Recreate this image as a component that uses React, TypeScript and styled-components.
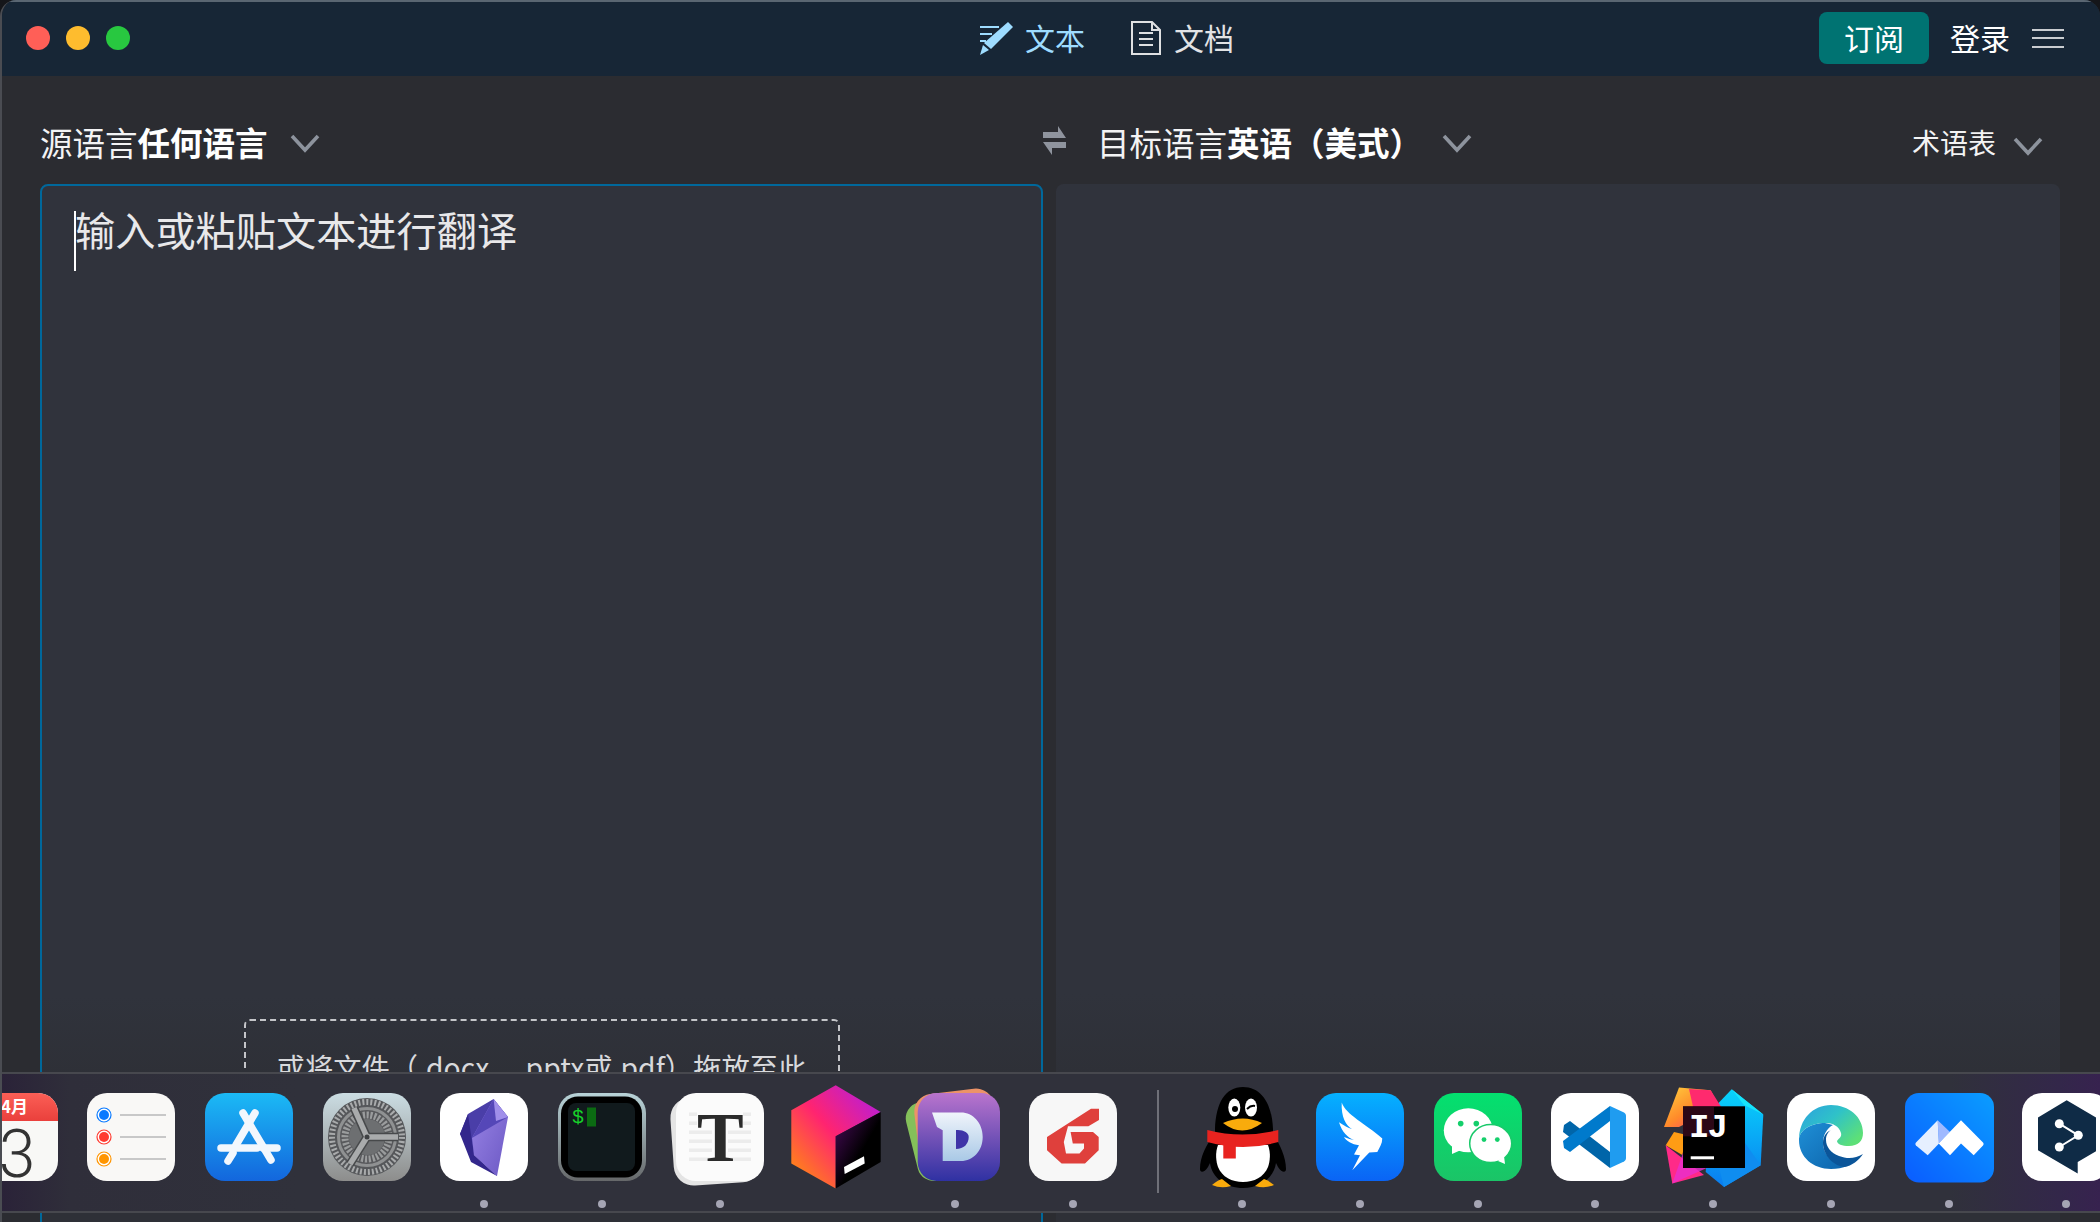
import React from "react";
import styled, { createGlobalStyle } from "styled-components";

const GlobalStyle = createGlobalStyle`
  html, body {
    margin: 0;
    height: 100%;
    background: #15161a;
    overflow: hidden;
  }
  body {
    font-family: "Noto Sans CJK SC", "Noto Sans", sans-serif;
  }
  * { box-sizing: border-box; }
`;

const Window = styled.div`
  position: relative;
  width: 2100px;
  height: 1222px;
  display: flex;
  flex-direction: column;
  overflow: hidden;
  background: #2b2c31;
  border-left: 2px solid #4a4c52;
  border-radius: 16px 16px 0 0;
`;

const TitleBar = styled.header`
  height: 76px;
  flex: none;
  display: flex;
  align-items: center;
  background: #172636;
  border-top: 2px solid #5a6672;
  padding: 0 36px 0 24px;
`;

const Lights = styled.div`
  display: flex;
  gap: 16px;
  margin-top: -2px;
`;

const Light = styled.span<{ $color: string }>`
  width: 24px;
  height: 24px;
  border-radius: 50%;
  background: ${({ $color }) => $color};
`;

const Tabs = styled.nav`
  display: flex;
  align-items: center;
  margin-left: auto;
  margin-right: 585px;
  margin-top: -2px;
`;

const TabLabel = styled.span<{ $active?: boolean }>`
  font-size: 30px;
  line-height: 40px;
  margin-top: -3px;
  margin-left: ${({ $active }) => ($active ? "10px" : "13px")};
  margin-right: ${({ $active }) => ($active ? "46px" : "0")};
  color: ${({ $active }) => ($active ? "#9edcff" : "#e2e3e5")};
`;

const Actions = styled.div`
  display: flex;
  align-items: center;
  margin-top: -2px;
`;

const SubscribeButton = styled.button`
  width: 110px;
  height: 52px;
  padding: 0 0 3px;
  border: 0;
  border-radius: 8px;
  background: #007372;
  color: #fff;
  font: inherit;
  font-size: 30px;
  line-height: 40px;
`;

const Login = styled.span`
  margin: -3px 22px 0 21px;
  font-size: 30px;
  line-height: 40px;
  color: #fff;
`;

const Burger = styled.div`
  width: 32px;
  display: flex;
  flex-direction: column;
  gap: 6.5px;
  span {
    height: 2px;
    background: #c9ccd0;
  }
`;

const Main = styled.main`
  flex: 1;
  min-height: 0;
  padding: 0 38px;
  display: flex;
  flex-direction: column;
`;

const Columns = styled.div`
  display: grid;
  grid-template-columns: 1003px 1004px;
  gap: 13px;
`;

const LangRow = styled(Columns)`
  height: 108px;
  align-items: center;
`;

const LangGroup = styled.div`
  display: flex;
  align-items: center;
  height: 44px;
  margin-top: 24px;
`;

const LangLabel = styled.span`
  font-size: 32.5px;
  line-height: 44px;
  color: #f3f3f4;
  white-space: nowrap;
  b {
    font-weight: 700;
    color: #fff;
  }
`;

const ChevronSvg = styled.svg<{ $gap: number; $drop?: number }>`
  flex: none;
  margin-left: ${({ $gap }) => $gap}px;
  margin-top: ${({ $drop }) => $drop ?? 2}px;
`;

const Chevron = ({ gap, drop }: { gap: number; drop?: number }) => (
  <ChevronSvg $gap={gap} $drop={drop} width="30" height="20" viewBox="0 0 30 20" fill="none" stroke="#8d939d" strokeWidth="3.6">
    <path d="M2 3l13 14L28 3" />
  </ChevronSvg>
);

const SwapButton = styled.span`
  display: flex;
  margin: -4px 30px 0 -13px;
`;

const Glossary = styled.span`
  margin-left: auto;
  font-size: 28px;
  line-height: 40px;
  color: #f3f3f4;
`;

const GlossaryEnd = styled.span`
  display: flex;
  margin-right: 17px;
  margin-top: 8px;
`;

const PanelRow = styled(Columns)`
  flex: 1;
  min-height: 0;
`;

const Panel = styled.section<{ $focused?: boolean }>`
  position: relative;
  height: 1100px;
  display: flex;
  flex-direction: column;
  background: linear-gradient(#30333c 0, #30333c 810px, #2e3037 890px);
  border-radius: 8px;
  border: ${({ $focused }) => ($focused ? "2px solid #00689b" : "0")};
`;

const Placeholder = styled.div`
  padding: 15px 0 0 33px;
  font-size: 40.2px;
  line-height: 56px;
  color: #e8e8ea;
`;

const Caret = styled.span`
  position: absolute;
  left: 32px;
  top: 25px;
  width: 2px;
  height: 60px;
  background: #fff;
`;

const DropZone = styled.div`
  width: 596px;
  height: 130px;
  margin: 762px auto 0;
  padding-top: 26px;
  border: 2px dashed #c4c5c9;
  border-radius: 6px;
  text-align: center;
  font-size: 28.3px;
  line-height: 40px;
  color: #d8d9dc;
  white-space: nowrap;
`;

const Dock = styled.footer`
  position: absolute;
  left: -2px;
  right: 0;
  top: 1072px;
  height: 141px;
  display: flex;
  overflow: hidden;
  border-top: 2px solid #47484e;
  border-bottom: 2px solid #47484e;
  background: linear-gradient(
    90deg,
    #2a2238 0,
    #2f2e3a 70px,
    #30313b 300px,
    #30313b 1950px,
    #33274a 2060px,
    #37224f 2100px
  );
`;

const DockTrack = styled.div`
  display: flex;
  flex: none;
  margin-left: -45.3px;
`;

const DockItem = styled.div`
  width: 117.7px;
  flex: none;
  display: flex;
  flex-direction: column;
  align-items: center;
  padding-top: 3px;
  svg {
    display: block;
    flex: none;
  }
`;

const RunDot = styled.span<{ $on: boolean }>`
  width: 8px;
  height: 8px;
  margin-top: 3px;
  border-radius: 50%;
  background: #a5a5b4;
  visibility: ${({ $on }) => ($on ? "visible" : "hidden")};
`;

const DockDivider = styled.div`
  width: 52px;
  flex: none;
  display: flex;
  justify-content: center;
  padding-top: 16px;
  span {
    width: 2px;
    height: 103px;
    background: #6f7078;
  }
`;

const ICON_BOX = { width: 120, height: 120, viewBox: "-16 -16 120 120" };
const MONO = "'Liberation Mono', monospace";
const SERIF = "'Liberation Serif', serif";
const SANS = "'Noto Sans CJK SC', sans-serif";

const PenIcon = () => (
  <svg width="36" height="36" viewBox="0 0 36 36" fill="#9edcff">
    <path d="M29 2l5 5L12 29l-7-6z" />
    <path d="M4 25l6 5-9 5z" />
    <rect x="1" y="6" width="19" height="2" />
    <rect x="1" y="13" width="12" height="2" />
    <rect x="1" y="20" width="6" height="2" />
  </svg>
);

const DocIcon = () => (
  <svg width="30" height="36" viewBox="0 0 30 36" fill="none" stroke="#dfe0e2" strokeWidth="2">
    <path d="M1 2h20l8 8v24H1z" />
    <path d="M21 2v8h8" />
    <path d="M8 13h14M8 19h14M8 25h14" />
  </svg>
);

const SwapIcon = () => (
  <svg width="24" height="29" viewBox="0 0 24 29" fill="#8f949e">
    <path d="M0 6h15V0l8 12H0z" />
    <path d="M23 16v6H9v7L0 16z" />
  </svg>
);

const Tile = styled.rect.attrs({ x: 0, y: 0, width: 88, height: 88, rx: 20 })``;

const CalendarIcon = () => (
  <svg {...ICON_BOX}>
    <defs>
      <linearGradient id="calTop" x1="0" y1="0" x2="0" y2="1">
        <stop offset="0" stopColor="#fb5f56" />
        <stop offset="1" stopColor="#ea403c" />
      </linearGradient>
      <clipPath id="calClip"><Tile /></clipPath>
    </defs>
    <Tile fill="#f8f8f6" />
    <rect width="88" height="28" fill="url(#calTop)" clipPath="url(#calClip)" />
    <text x="31" y="20" fontSize="17" fontWeight="700" fill="#fff" fontFamily={SANS}>4月</text>
    <text x="47" y="84" fontSize="66" fontWeight="300" textAnchor="middle" fill="#333" fontFamily="Roboto, sans-serif">3</text>
  </svg>
);

const RemindersIcon = () => (
  <svg {...ICON_BOX}>
    <Tile fill="#f9f8f6" />
    {[["#0a7aff", 22], ["#ff3b30", 44], ["#ff9500", 66]].map(([color, y]) => (
      <g key={color as string}>
        <circle cx="17" cy={y} r="7" fill="#fff" stroke={color as string} strokeWidth="1.2" />
        <circle cx="17" cy={y} r="5" fill={color as string} />
        <rect x="33" y={(y as number) - 0.8} width="46" height="1.6" fill="#bcbcbc" />
      </g>
    ))}
  </svg>
);

const AppStoreIcon = () => (
  <svg {...ICON_BOX}>
    <defs>
      <linearGradient id="asBg" x1="0" y1="0" x2="0" y2="1">
        <stop offset="0" stopColor="#1bbaf5" />
        <stop offset="1" stopColor="#1366dd" />
      </linearGradient>
    </defs>
    <Tile fill="url(#asBg)" />
    <g stroke="#f2f7fd" strokeWidth="7.5" strokeLinecap="round">
      <path d="M50 20L31 52" />
      <path d="M28 60l-5 8" />
      <path d="M38 20l28 47" />
      <path d="M16 55h36" />
      <path d="M58 55h14" />
    </g>
  </svg>
);

const SettingsIcon = () => (
  <svg {...ICON_BOX}>
    <defs>
      <linearGradient id="setBg" x1="0" y1="0" x2="0" y2="1">
        <stop offset="0" stopColor="#cbdde3" />
        <stop offset="1" stopColor="#8d8d8c" />
      </linearGradient>
    </defs>
    <Tile fill="url(#setBg)" />
    <circle cx="44" cy="44" r="39" fill="#55575a" />
    <circle cx="44" cy="44" r="35" fill="none" stroke="#a9abac" strokeWidth="6" strokeDasharray="2 2" />
    <circle cx="44" cy="44" r="31" fill="#58595c" />
    <circle cx="44" cy="44" r="28.500" fill="none" stroke="#8f9192" strokeWidth="3" />
    <circle cx="44" cy="44" r="22" fill="none" stroke="#9a9c9d" strokeWidth="7" strokeDasharray="2.200 1.600" />
    <circle cx="44" cy="44" r="18" fill="#6d6f71" />
    <g stroke="#47494b" strokeWidth="8.500">
      <path d="M44 44L31 15" />
      <path d="M44 44L75 44" />
      <path d="M44 44L27 71" />
    </g>
    <g stroke="#a9abac" strokeWidth="5.500">
      <path d="M44 44L31 15" />
      <path d="M44 44L75 44" />
      <path d="M44 44L27 71" />
    </g>
    <circle cx="44" cy="44" r="2.500" fill="#3f4143" />
  </svg>
);

const ObsidianIcon = () => (
  <svg {...ICON_BOX}>
    <defs>
      <linearGradient id="obLight" x1="0" y1="0" x2="1" y2="1">
        <stop offset="0" stopColor="#9a85e6" />
        <stop offset="1" stopColor="#6b58c4" />
      </linearGradient>
    </defs>
    <Tile fill="#fff" />
    <path d="M53.600 6L28 21 20 41l14 21 23 21z" fill="#4a3ea8" />
    <path d="M28 21L20 41l11 28 26 14-23-21z" fill="#33278c" />
    <path d="M53.600 6L68 24l-11 59-23-21-2-17z" fill="url(#obLight)" />
    <path d="M53.600 6L68 24 32 45z" fill="#5547b8" />
    <path d="M53.600 6L68 24l-12 4z" fill="#a08fea" />
  </svg>
);

const TerminalIcon = () => (
  <svg {...ICON_BOX}>
    <defs>
      <linearGradient id="termEdge" x1="0" y1="0" x2="0" y2="1">
        <stop offset="0" stopColor="#b8d3d8" />
        <stop offset="1" stopColor="#66686a" />
      </linearGradient>
    </defs>
    <Tile fill="url(#termEdge)" />
    <rect x="3" y="3.500" width="81" height="81" rx="17" fill="#000" />
    <rect x="10" y="10" width="67" height="68" rx="8" fill="#111a1d" />
    <text x="14" y="30" fontSize="20" fill="#17d22a" fontFamily={MONO}>$</text>
    <rect x="29" y="14.500" width="9" height="19" fill="#0b6b12" />
  </svg>
);

const TyporaIcon = () => (
  <svg {...ICON_BOX}>
    <rect x="-4" y="3" width="88" height="88" rx="20" fill="#e4e4e4" transform="rotate(-4 40 47)" />
    <Tile fill="#fbfbfb" />
    <g fill="#ececec">
      <rect x="13" y="19.500" width="8" height="3.500" />
      <rect x="67" y="19.500" width="8" height="3.500" />
      <rect x="13" y="28.500" width="8" height="3.500" />
      <rect x="67" y="28.500" width="8" height="3.500" />
      {[37.5, 46.5, 55.5, 64.5].map((y) => (
        <React.Fragment key={y}>
          <rect x="13" y={y} width="23" height="3.500" />
          <rect x="52" y={y} width="23" height="3.500" />
        </React.Fragment>
      ))}
    </g>
    <text x="44.300" y="67.500" fontSize="70" fontWeight="700" textAnchor="middle" fill="#2b2b2b" fontFamily={SERIF}>T</text>
  </svg>
);

const ToolboxIcon = () => (
  <svg {...ICON_BOX}>
    <defs>
      <linearGradient id="tbFace" x1="0" y1="1" x2="1" y2="0">
        <stop offset="0.05" stopColor="#ff8f0e" />
        <stop offset="0.5" stopColor="#ff2470" />
        <stop offset="1" stopColor="#ac1cec" />
      </linearGradient>
      <linearGradient id="tbDark" x1="0" y1="0" x2="1" y2="1">
        <stop offset="0" stopColor="#4a0a5c" />
        <stop offset="0.55" stopColor="#000" />
      </linearGradient>
    </defs>
    <path d="M42.700-7.700L87.700 19 42.700 43.300v52.300L-1.700 70.600V17.300z" fill="url(#tbFace)" />
    <path d="M87.700 19v50L42.700 95.600V43.300z" fill="url(#tbDark)" />
    <path d="M51 74l20-10.700.7 7.300-20 10.400z" fill="#fff" />
  </svg>
);

const DashIcon = () => (
  <svg {...ICON_BOX}>
    <defs>
      <linearGradient id="dashBg" x1="0" y1="0" x2="0" y2="1">
        <stop offset="0" stopColor="#b974cd" />
        <stop offset="1" stopColor="#2f31a2" />
      </linearGradient>
      <linearGradient id="dashD" x1="0" y1="0" x2="0" y2="1">
        <stop offset="0" stopColor="#f0f4fb" />
        <stop offset="1" stopColor="#a9c9e6" />
      </linearGradient>
    </defs>
    <rect x="0" y="4" width="70" height="80" rx="16" fill="#84c05a" transform="rotate(-14 35 44)" />
    <rect x="6" y="-2" width="80" height="84" rx="18" fill="#ec9368" transform="rotate(-7 46 40)" />
    <rect x="6.700" y="0" width="82.300" height="88" rx="19" fill="url(#dashBg)" />
    <path d="M21 19.600h29C62 19.600 71.700 30 71.700 44S62 68 50 68H31.700V37.300L26 34z" fill="url(#dashD)" />
    <path d="M45 37h2c6 0 10.700 3 10.700 7 0 7-5 12-12.700 12z" fill="#3f34a8" />
  </svg>
);

const FoxitIcon = () => (
  <svg {...ICON_BOX}>
    <Tile fill="#f7f7f7" />
    <path
      d="M62 15.700h8V27L59.400 33.300H39L34.800 49l2.200 11.600h13.500l4.500-5v-5H43.800L41.600 39H64l5.700 5v13.300L56 70.600H32.600L18 57.300V44z"
      fill="#df403c"
    />
  </svg>
);

const QQIcon = () => (
  <svg {...ICON_BOX}>
    <path
      d="M45-6C27-6 18 10 17 36v4C8 52 2 64 2 76c0 4 4 4 8-2l2-4c2 15 16 25 33 25s31-10 33-25l2 4c4 6 8 6 8 2 0-12-6-24-13-36v-4C74 10 63-6 45-6z"
      fill="#000"
    />
    <path d="M20 52h50c3 8 2 16 0 22-4 10-14 15-25 15s-21-5-25-15c-2-6-3-14 0-22z" fill="#fff" />
    <ellipse cx="36.300" cy="14.600" rx="6" ry="9" fill="#fff" />
    <circle cx="37" cy="16" r="3" fill="#000" />
    <ellipse cx="53" cy="14.600" rx="6" ry="9" fill="#fff" />
    <path d="M49 16q4-4 8-3" stroke="#000" strokeWidth="2" fill="none" />
    <path d="M25 30q20-9 39 0-20 15-39 0z" fill="#f9ab0c" />
    <path d="M9.300 37q35 9 71 0l0 12q-35 10-71 0z" fill="#e8231f" />
    <rect x="25.300" y="47" width="12.500" height="18.500" fill="#e8231f" />
    <path d="M14 92q6-5 10-6l9 7q-10 3-19-1z" fill="#f9ab0c" />
    <path d="M76 92q-6-5-10-6l-9 7q10 3 19-1z" fill="#f9ab0c" />
  </svg>
);

const DingTalkIcon = () => (
  <svg {...ICON_BOX}>
    <defs>
      <linearGradient id="dingBg" x1="0" y1="0" x2="0" y2="1">
        <stop offset="0" stopColor="#05b1ff" />
        <stop offset="1" stopColor="#0a64f5" />
      </linearGradient>
    </defs>
    <Tile fill="url(#dingBg)" />
    <path
      d="M25.700 9.600C30 22 50 31 66.300 45.600c0 5-2.800 9.400-5 13.400l-8 .6-17 17.700L44 62.300l-6-.7 5-9.300c-7-1-13-4.300-15-8.300 4 1.500 7 2.500 10 3-6-2-12-8-15-17.800 5 3.500 9 5.500 13 6.800-6-3-11-12-10.300-26.400z"
      fill="#fff"
    />
  </svg>
);

const WeChatIcon = () => (
  <svg {...ICON_BOX}>
    <defs>
      <linearGradient id="wxBg" x1="0" y1="0" x2="0" y2="1">
        <stop offset="0" stopColor="#03e06f" />
        <stop offset="1" stopColor="#1bc467" />
      </linearGradient>
    </defs>
    <Tile fill="url(#wxBg)" />
    <ellipse cx="34.300" cy="37.300" rx="24.500" ry="22" fill="#fff" />
    <path d="M18 52l0 9 9-4z" fill="#fff" />
    <ellipse cx="56.700" cy="50.600" rx="21" ry="19" fill="#fff" stroke="#19c96a" strokeWidth="1.500" />
    <path d="M64 68l7 3-1-8z" fill="#fff" />
    <g fill="#14cf6b">
      <circle cx="26.700" cy="30.600" r="2.800" />
      <circle cx="42.300" cy="30.600" r="2.800" />
      <circle cx="50" cy="46.600" r="2.400" />
      <circle cx="63.300" cy="46.600" r="2.400" />
    </g>
  </svg>
);

const VSCodeIcon = () => (
  <svg {...ICON_BOX}>
    <Tile fill="#fff" />
    <path d="M13 32l6-4 40 31v16L12 39z" fill="#0065a9" />
    <path d="M13 55l6 4 40-31V13L12 48z" fill="#007acc" />
    <path d="M59 13l14 6.500c1.300.7 2 2 2 3.500v42c0 1.500-.7 2.800-2 3.500L59 75z" fill="#1f9cf0" />
  </svg>
);

const IntelliJIcon = () => (
  <svg {...ICON_BOX}>
    <defs>
      <linearGradient id="ijBlue" x1="0" y1="0" x2="0" y2="1">
        <stop offset="0" stopColor="#08d4fb" />
        <stop offset="1" stopColor="#0a7cf0" />
      </linearGradient>
      <linearGradient id="ijWarm" x1="0" y1="0" x2="1" y2="1">
        <stop offset="0" stopColor="#ffd23f" />
        <stop offset="0.5" stopColor="#ff8a2a" />
        <stop offset="1" stopColor="#ff2e78" />
      </linearGradient>
    </defs>
    <path d="M62.700-3.700L94.300 21.600 91.700 72.300 55 94 36.700 79 40 20z" fill="url(#ijBlue)" />
    <path d="M94.300 21.600L75 12 62.700-3.700z" fill="#16e4fb" />
    <path d="M76 50l15.700 22.300L55 94l-5-19z" fill="#0f8df0" />
    <path d="M10-5.400L41.700-2.700 50 14 10 34l-15 0z" fill="url(#ijWarm)" />
    <path d="M20-4L41.700-2.700 56 20 30 40z" fill="#ff2a6e" />
    <path d="M5 39L-3.300 52.300 13.300 62 18 42z" fill="#ff9c14" />
    <path d="M3.300 90.600L-3.300 52.300 35 82z" fill="#ff2a88" />
    <path d="M3.300 90.600L14 60 40 74z" fill="#e92fd0" opacity="0.8" />
    <rect x="14" y="13.300" width="62" height="61.700" fill="#000" />
    <rect x="14" y="13.300" width="31" height="30" fill="#4a0d26" opacity="0.6" />
    <text x="20" y="44" fontSize="34" fontWeight="700" fill="#fff" fontFamily={MONO} letterSpacing="-2">IJ</text>
    <rect x="21.700" y="63.300" width="23.300" height="3" fill="#fff" />
  </svg>
);

const EdgeIcon = () => (
  <svg {...ICON_BOX}>
    <defs>
      <linearGradient id="edgeTop" x1="0" y1="0" x2="1" y2="0.700">
        <stop offset="0" stopColor="#2b9fe0" />
        <stop offset="0.500" stopColor="#2fc2c8" />
        <stop offset="1" stopColor="#5de077" />
      </linearGradient>
      <linearGradient id="edgeMid" x1="0" y1="0" x2="1" y2="1">
        <stop offset="0" stopColor="#1f8fd6" />
        <stop offset="1" stopColor="#0c63ab" />
      </linearGradient>
    </defs>
    <Tile fill="#fff" />
    <path d="M38 30C24 30 12 37 12 47c0 17 14 29 32 29 6 0 12-1 16-3-12 0-24-11-24-23 0-8 4-15 10-18z" fill="url(#edgeMid)" />
    <path d="M36 50c0 10 8 22 21 24 8-1 15-7 19-13-8 5-16 5-24 2-8-3-13-9-13-16 0-5 2-8 5-10-5 2-8 7-8 13z" fill="#0b5599" />
    <path d="M12 47C12 26 26 12 44 12c18 0 32 12 32 28 0 8-5 13-14 13-7 0-12-2-12-5 2-3 5-4 4-8-2-7-8-10-16-10-14 0-26 7-26 17z" fill="url(#edgeTop)" />
  </svg>
);

const LarkIcon = () => (
  <svg {...ICON_BOX}>
    <defs>
      <linearGradient id="larkBg" x1="0" y1="1" x2="1" y2="0">
        <stop offset="0" stopColor="#0a5cff" />
        <stop offset="1" stopColor="#0a9dff" />
      </linearGradient>
    </defs>
    <rect x="0" y="0" width="89" height="89.500" rx="14" fill="url(#larkBg)" />
    <path d="M32.700 27.300L11 49.600c-.8 1-.8 2 0 3L22.700 62.300 34 50.600z" fill="#e6efff" />
    <path d="M32.700 27.300L45 39 33.700 50.600z" fill="#9fb9ff" />
    <path d="M56 27.300L78 49.600c.8 1 .8 2 0 3L68.700 62.300 56 50.600 45 62.300 33.700 50.600z" fill="#fff" />
  </svg>
);

const DeepLIcon = () => (
  <svg {...ICON_BOX}>
    <Tile fill="#fff" />
    <path d="M44.700 7.300L74 24.600v33.700L55.700 69v11.600L16 57.300V24.600z" fill="#0f2b46" />
    <path d="M37.300 30.700l19 11.600-19 11.700" stroke="#fff" strokeWidth="2" fill="none" />
    <circle cx="37.300" cy="30.700" r="4.500" fill="#fff" />
    <circle cx="56.300" cy="42.300" r="4.500" fill="#fff" />
    <circle cx="37.300" cy="54" r="4.500" fill="#fff" />
  </svg>
);

type DockApp = { name: string; icon: React.ReactNode; running: boolean };

const leftApps: DockApp[] = [
  { name: "calendar", icon: <CalendarIcon />, running: false },
  { name: "reminders", icon: <RemindersIcon />, running: false },
  { name: "appstore", icon: <AppStoreIcon />, running: false },
  { name: "settings", icon: <SettingsIcon />, running: false },
  { name: "obsidian", icon: <ObsidianIcon />, running: true },
  { name: "terminal", icon: <TerminalIcon />, running: true },
  { name: "typora", icon: <TyporaIcon />, running: true },
  { name: "toolbox", icon: <ToolboxIcon />, running: false },
  { name: "dash", icon: <DashIcon />, running: true },
  { name: "foxit", icon: <FoxitIcon />, running: true },
];

const rightApps: DockApp[] = [
  { name: "qq", icon: <QQIcon />, running: true },
  { name: "dingtalk", icon: <DingTalkIcon />, running: true },
  { name: "wechat", icon: <WeChatIcon />, running: true },
  { name: "vscode", icon: <VSCodeIcon />, running: true },
  { name: "intellij", icon: <IntelliJIcon />, running: true },
  { name: "edge", icon: <EdgeIcon />, running: true },
  { name: "lark", icon: <LarkIcon />, running: true },
  { name: "deepl", icon: <DeepLIcon />, running: true },
];

const renderApp = (app: DockApp) => (
  <DockItem key={app.name}>
    {app.icon}
    <RunDot $on={app.running} />
  </DockItem>
);

const App = () => (
  <>
    <GlobalStyle />
    <Window>
      <TitleBar>
        <Lights>
          <Light $color="#ff5f57" />
          <Light $color="#febc2e" />
          <Light $color="#28c840" />
        </Lights>
        <Tabs>
          <PenIcon />
          <TabLabel $active>文本</TabLabel>
          <DocIcon />
          <TabLabel>文档</TabLabel>
        </Tabs>
        <Actions>
          <SubscribeButton>订阅</SubscribeButton>
          <Login>登录</Login>
          <Burger><span /><span /><span /></Burger>
        </Actions>
      </TitleBar>
      <Main>
        <LangRow>
          <LangGroup>
            <LangLabel>源语言<b>任何语言</b></LangLabel>
            <Chevron gap={22} />
          </LangGroup>
          <LangGroup>
            <SwapButton><SwapIcon /></SwapButton>
            <LangLabel>目标语言<b>英语（美式）</b></LangLabel>
            <Chevron gap={20} />
            <Glossary>术语表</Glossary>
            <GlossaryEnd><Chevron gap={17} drop={0} /></GlossaryEnd>
          </LangGroup>
        </LangRow>
        <PanelRow>
          <Panel $focused>
            <Caret />
            <Placeholder>输入或粘贴文本进行翻译</Placeholder>
            <DropZone>或将文件（.docx、.pptx或.pdf）拖放至此</DropZone>
          </Panel>
          <Panel />
        </PanelRow>
      </Main>
      <Dock>
        <DockTrack>
          {leftApps.map(renderApp)}
          <DockDivider><span /></DockDivider>
          {rightApps.map(renderApp)}
        </DockTrack>
      </Dock>
    </Window>
  </>
);

export default App;
